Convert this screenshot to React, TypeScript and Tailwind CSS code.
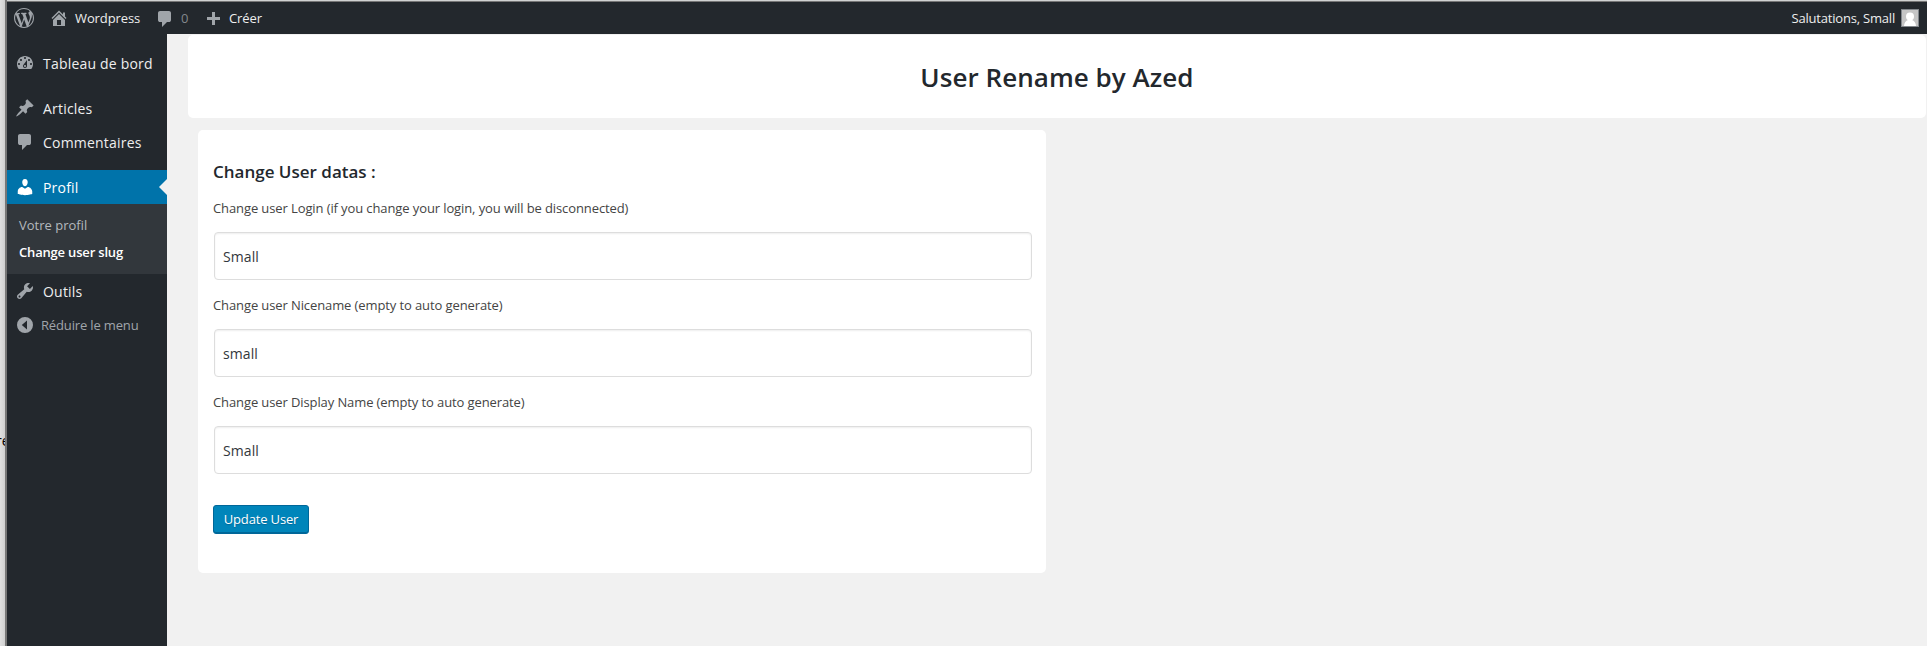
import type { ReactNode } from "react";

const paths = {
  wordpress:
    "M20 10c0-5.51-4.49-10-10-10C4.48 0 0 4.49 0 10c0 5.52 4.48 10 10 10 5.51 0 10-4.48 10-10zM7.78 15.37L4.37 6.22c.55-.02 1.17-.08 1.17-.08.5-.06.44-1.13-.06-1.11 0 0-1.45.11-2.37.11-.18 0-.37 0-.58-.01C4.12 2.69 6.87 1.11 10 1.11c2.33 0 4.45.87 6.05 2.34-.68-.11-1.65.39-1.65 1.58 0 .74.45 1.36.9 2.1.35.61.55 1.36.55 2.46 0 1.49-1.4 5-1.4 5l-3.03-8.37c.54-.02.82-.17.82-.17.5-.05.44-1.25-.06-1.22 0 0-1.44.12-2.38.12-.87 0-2.33-.12-2.33-.12-.5-.03-.56 1.2-.06 1.22l.92.08 1.26 3.41zM17.41 10c.24-.64.74-1.87.43-4.25.7 1.29 1.05 2.71 1.05 4.25 0 3.29-1.73 6.24-4.4 7.78.97-2.59 1.94-5.2 2.92-7.78zM6.1 18.09C3.12 16.65 1.11 13.53 1.11 10c0-1.3.23-2.48.72-3.59C3.25 10.3 4.67 14.2 6.1 18.09zm4.03-6.63l2.58 6.98c-.86.29-1.76.45-2.71.45-.79 0-1.57-.11-2.29-.33.81-2.38 1.62-4.74 2.42-7.1z",
  home: "M16 8.5l1.53 1.53-1.06 1.06L10 4.6l-6.47 6.49-1.06-1.06L10 2.5l4 4v-2h2v4zm-6-2.46l6 5.99V18H4v-5.97zM12 17v-5H8v5h4z",
  comment:
    "M5 2h9q.82 0 1.41.59T16 4v7q0 .82-.59 1.41T14 13h-2l-5 5v-5H5q-.82 0-1.41-.59T3 11V4q0-.82.59-1.41T5 2z",
  plus: "M17 7v3h-5v5H9v-5H4V7h5V2h3v5h5z",
  dashboard:
    "M3.76 16h12.48c1.1-1.37 1.76-3.11 1.76-5 0-4.42-3.58-8-8-8s-8 3.58-8 8c0 1.89.66 3.63 1.76 5zM10 4c.55 0 1 .45 1 1s-.45 1-1 1-1-.45-1-1 .45-1 1-1zM6 6c.55 0 1 .45 1 1s-.45 1-1 1-1-.45-1-1 .45-1 1-1zm8 0c.55 0 1 .45 1 1s-.45 1-1 1-1-.45-1-1 .45-1 1-1zm-5.37 5.55L12 7v6c0 1.1-.9 2-2 2s-2-.9-2-2c0-.57.24-1.08.63-1.45zM4 10c.55 0 1 .45 1 1s-.45 1-1 1-1-.45-1-1 .45-1 1-1zm12 0c.55 0 1 .45 1 1s-.45 1-1 1-1-.45-1-1 .45-1 1-1zm-5 3c0-.55-.45-1-1-1s-1 .45-1 1 .45 1 1 1 1-.45 1-1z",
  pin: "M10.44 3.02l1.82-1.82 6.36 6.35-1.83 1.82c-1.05-.68-2.48-.57-3.41.36l-.75.75c-.92.93-1.04 2.35-.35 3.41l-1.83 1.82-2.41-2.41-2.8 2.79c-.42.42-3.38 2.71-3.8 2.29s1.86-3.39 2.28-3.81l2.79-2.79L4.1 9.36l1.83-1.82c1.05.69 2.48.57 3.4-.36l.75-.75c.93-.92 1.05-2.35.36-3.41z",
  user: "M10 9.25c-2.27 0-2.73-3.44-2.73-3.44C7 4.02 7.82 2 9.97 2c2.16 0 2.98 2.02 2.71 3.81 0 0-.41 3.44-2.68 3.44zm0 2.57L12.72 10c2.39 0 4.52 2.33 4.52 4.53v2.49s-3.65 1.13-7.24 1.13c-3.65 0-7.24-1.13-7.24-1.13v-2.49c0-2.25 1.94-4.48 4.47-4.48z",
  tools:
    "M16.68 9.77c-1.34 1.34-3.3 1.67-4.95.99l-5.41 6.52c-.99.99-2.59.99-3.58 0s-.99-2.59 0-3.57l6.52-5.42c-.68-1.65-.35-3.61.99-4.95 1.28-1.28 3.12-1.62 4.72-1.06l-2.89 2.89 2.82 2.82 2.86-2.87c.53 1.58.18 3.39-1.08 4.65zM3.81 16.21c.4.39 1.04.39 1.43 0 .4-.4.4-1.04 0-1.43-.39-.4-1.03-.4-1.43 0-.39.39-.39 1.03 0 1.43z",
  collapse:
    "M10 2a8 8 0 1 0 0 16 8 8 0 0 0 0-16zM12 5.5v9L6.800 10z",
};

function Icon({ name, className = "" }: { name: keyof typeof paths; className?: string }) {
  return (
    <svg viewBox="0 0 20 20" className={`size-5 shrink-0 fill-current ${className}`} aria-hidden="true">
      <path d={paths[name]} fillRule={name === "collapse" ? "evenodd" : "nonzero"} />
    </svg>
  );
}

function MenuItem({ icon, children, active = false }: { icon: keyof typeof paths; children: ReactNode; active?: boolean }) {
  return (
    <a className={`relative flex h-[34px] items-center pl-2 ${active ? "bg-[#0073aa] text-white" : "text-[#eee]"}`}>
      <Icon name={icon} className={active ? "text-white" : "text-[#a0a5aa]"} />
      <span className="pt-0.5 pl-2 text-sm tracking-[0.2px] whitespace-nowrap">{children}</span>
      {active && <span className="absolute top-[9px] right-0 border-y-8 border-r-8 border-y-transparent border-r-[#f1f1f1]" />}
    </a>
  );
}

function Field({ label, value }: { label: string; value: string }) {
  return (
    <label className="block h-[97px]">
      <span className="block h-[34px] text-[13px] leading-5 tracking-[-0.105px] text-[#444]">{label}</span>
      <input
        defaultValue={value}
        className="ml-px block h-12 w-[818px] rounded border border-[#ddd] bg-white px-2 text-sm tracking-[0.1px] text-[#32373c] shadow-[inset_0_1px_2px_rgba(0,0,0,0.07)]"
      />
    </label>
  );
}

export default function App() {
  return (
    <div className="flex h-[646px] w-[1927px] overflow-hidden bg-[#f1f1f1] font-['Open_Sans',sans-serif]">
      <div className="w-[5px] shrink-0 overflow-hidden bg-linear-to-r from-[#e0e0e0] to-[#cfcfcf] pt-[431px] text-sm leading-5 text-black">
        <span className="-ml-1">re</span>
      </div>
      <div className="w-0.5 shrink-0 bg-[#777]" />
      <div className="flex min-w-0 flex-1 flex-col">
        <div className="h-px shrink-0 bg-[#d0d2d2]" />
        <div className="h-px shrink-0 bg-[#777]" />
        <header className="flex h-8 shrink-0 items-center bg-[#23282d] text-[13px] tracking-[-0.1px] text-[#eee]">
          <Icon name="wordpress" className="ml-[7px] text-[#a0a5aa]" />
          <Icon name="home" className="ml-[15px] text-[#a0a5aa]" />
          <span className="ml-[6px] w-[66px] pt-0.5">Wordpress</span>
          <Icon name="comment" className="mt-0.5 ml-[14px] text-[#a0a5aa]" />
          <span className="ml-[6px] w-[8px] pt-0.5 text-[#82878c]">0</span>
          <Icon name="plus" className="mt-1 ml-[14px] text-[#a0a5aa]" />
          <span className="ml-[6px] pt-0.5">Créer</span>
          <span className="ml-auto pt-0.5 tracking-[-0.2px]">Salutations, Small</span>
          <svg viewBox="0 0 18 18" className="mr-2 ml-[6px] size-[18px]" aria-hidden="true">
            <path d="M0 0h18v18H0z" fill="#82878c" />
            <path d="M1 1h16v16H1z" fill="#c5c5c5" />
            <circle cx="9" cy="7.5" r="4" fill="#fff" />
            <path d="M3 17c.2-3.500 2-5.500 4-6h4c2 .5 3.800 2.500 4 6z" fill="#fff" />
          </svg>
        </header>
        <div className="flex min-h-0 flex-1">
          <nav className="w-40 shrink-0 bg-[#23282d] pt-3">
            <MenuItem icon="dashboard">Tableau de bord</MenuItem>
            <div className="h-[11px]" />
            <MenuItem icon="pin">Articles</MenuItem>
            <MenuItem icon="comment">Commentaires</MenuItem>
            <div className="h-[11px]" />
            <MenuItem icon="user" active>Profil</MenuItem>
            <div className="flex h-[70px] flex-col bg-[#32373c] px-3 pt-2 text-[13px] leading-[27px] text-[#b4b9be]">
              <a>Votre profil</a>
              <a className="font-semibold tracking-[-0.18px] text-white">Change user slug</a>
            </div>
            <MenuItem icon="tools">Outils</MenuItem>
            <a className="flex h-[34px] items-center pl-2 text-[13px] tracking-[-0.15px] text-[#a0a5aa]">
              <Icon name="collapse" />
              <span className="pt-0.5 pl-1.5">Réduire le menu</span>
            </a>
          </nav>
          <main className="flex-1 pt-px pr-px pl-[21px]">
            <div className="flex h-[83px] items-center justify-center rounded-[5px] bg-white">
              <h1 className="pt-0.5 text-[26px] font-semibold tracking-[0.05px] text-[#23282d]">User Rename by Azed</h1>
            </div>
            <section className="mt-3 ml-2.5 h-[443px] w-[848px] rounded-[5px] bg-white px-[15px] pt-[31px]">
              <h2 className="h-[37px] text-[17px] leading-[22px] font-semibold text-[#23282d]">Change User datas :</h2>
              <Field label="Change user Login (if you change your login, you will be disconnected)" value="Small" />
              <Field label="Change user Nicename (empty to auto generate)" value="small" />
              <Field label="Change user Display Name (empty to auto generate)" value="Small" />
              <button className="mt-4 block h-[29px] w-24 rounded-[3px] border border-[#006799] bg-[#0085ba] text-[13px] tracking-[-0.15px] text-white shadow-[inset_0_-1px_0_#006799] [text-shadow:0_1px_1px_#006799]">
                Update User
              </button>
            </section>
          </main>
        </div>
      </div>
    </div>
  );
}
